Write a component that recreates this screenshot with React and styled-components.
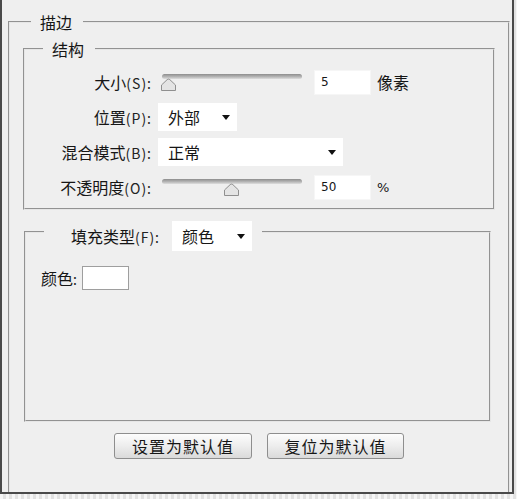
import React from 'react';
import styled, { createGlobalStyle } from 'styled-components';

const GlobalStyle = createGlobalStyle`
  html, body {
    margin: 0;
    padding: 0;
    background: #e8e8e8;
  }
  body {
    font-family: "Noto Sans CJK SC", "Liberation Sans", sans-serif;
    font-size: 16px;
    color: #161616;
  }
`;

const Screen = styled.div`
  width: 517px;
  height: 499px;
  overflow: hidden;
  background: repeating-linear-gradient(90deg, #f6f6f6 0 3px, #e2e2e2 3px 6px);
`;

const Window = styled.div`
  box-sizing: border-box;
  width: 514px;
  height: 494px;
  padding: 13px 0 0 6px;
  background: #efefef;
  border: 2px solid #4a4a4a;
  border-top: none;
  overflow: hidden;
`;

const Group = styled.fieldset`
  margin: 0;
  padding: 0;
  min-width: 0;
  border: 2px groove #e6e6e6;
`;

const OuterGroup = styled(Group)`
  width: 502px;
  height: 520px;
  box-sizing: border-box;
  border-bottom: none;
`;

const InnerGroup = styled(Group)`
  margin: ${p => p.$margin};
`;

const Legend = styled.legend`
  margin-left: ${p => p.$offset}px;
  padding: 0 11px 0 9px;
  line-height: 18px;
  height: 18px;
`;

const FillLegend = styled.legend`
  display: flex;
  align-items: flex-start;
  height: 22px;
  margin-left: 18px;
  padding: 0 10px 0 24px;
  gap: 12px;
`;

const Rows = styled.div`
  display: flex;
  flex-direction: column;
  gap: 7px;
  padding: 10px 0 7px;
`;

const Row = styled.div`
  display: flex;
  align-items: center;
  height: 28px;
`;

const Label = styled.span`
  width: ${p => p.$width || 127}px;
  margin-right: ${p => (p.$gap === undefined ? 6 : p.$gap)}px;
  text-align: right;
  white-space: nowrap;
  line-height: ${p => p.$line || 28}px;
`;

const Key = styled.span`
  font-size: 14px;
  letter-spacing: 1px;
  color: #222;
`;

const SliderBox = styled.div`
  display: flex;
  flex-direction: column;
  width: 140px;
  height: 28px;
  margin-left: 4px;
  padding-top: 6px;
  box-sizing: border-box;
`;

const Track = styled.div`
  height: 5px;
  border-radius: 3px;
  background: linear-gradient(#8d8d8d, #b9b9b9 60%, #dedede);
`;

const Thumb = styled.svg`
  display: block;
  margin-top: -1px;
`;

const Field = styled.div`
  box-sizing: border-box;
  width: 57px;
  height: 25px;
  margin-left: 12px;
  padding-left: 6px;
  background: #fff;
  border: 1px solid #f6f6f6;
  font-family: "DejaVu Sans", sans-serif;
  font-size: 12px;
  line-height: 23px;
`;

const Unit = styled.span`
  margin-left: 6px;
  font-size: ${p => (p.$latin ? 13 : 16)}px;
  font-family: ${p => (p.$latin ? '"DejaVu Sans", sans-serif' : 'inherit')};
`;

const Select = styled.div`
  box-sizing: border-box;
  display: flex;
  align-items: center;
  justify-content: space-between;
  width: ${p => p.$width}px;
  height: ${p => p.$height || 28}px;
  padding: 0 7px 0 10px;
  background: #fff;
  flex-shrink: 0;
`;

const Arrow = styled.span`
  width: 0;
  height: 0;
  border-left: 4px solid transparent;
  border-right: 4px solid transparent;
  border-top: 5px solid #111;
`;

const FillBody = styled.div`
  box-sizing: border-box;
  height: 177px;
  padding: 23px 0 0 9px;
`;

const ColorRow = styled.div`
  display: flex;
  align-items: center;
  height: 24px;
`;

const Swatch = styled.div`
  box-sizing: border-box;
  width: 47px;
  height: 24px;
  background: #fff;
  border: 1px solid #9e9e9e;
`;

const Buttons = styled.div`
  display: flex;
  justify-content: center;
  gap: 15px;
  margin-top: 11px;
`;

const Button = styled.button`
  width: ${p => p.$width}px;
  height: 26px;
  padding: 0;
  border: 1px solid #8e8e8e;
  border-radius: 3px;
  background: linear-gradient(#fdfdfd, #ededed 50%, #dadada);
  font-family: inherit;
  font-size: 16px;
  letter-spacing: 1px;
  color: #161616;
`;

const Slider = ({ pct }) => (
  <SliderBox>
    <Track />
    <Thumb
      width="17"
      height="14"
      viewBox="0 0 17 14"
      style={{ marginLeft: -2 + pct * 125 }}
    >
      <path
        d="M1.5 12.5 V7 L7.2 1.6 Q8.5 0.6 9.8 1.6 L15.5 7 V12.5 Z"
        fill="#e4e4e4"
        stroke="#8f8f8f"
        strokeLinejoin="round"
      />
    </Thumb>
  </SliderBox>
);

const Caption = ({ text, hotkey }) => (
  <>
    {text}
    <Key>({hotkey}):</Key>
  </>
);

export default function App() {
  return (
    <>
      <GlobalStyle />
      <Screen>
        <Window>
          <OuterGroup>
            <Legend $offset={21}>描边</Legend>

            <InnerGroup $margin="9px 13px 0 13px">
              <Legend $offset={18}>结构</Legend>
              <Rows>
                <Row>
                  <Label><Caption text="大小" hotkey="S" /></Label>
                  <Slider pct={0} />
                  <Field>5</Field>
                  <Unit>像素</Unit>
                </Row>
                <Row>
                  <Label><Caption text="位置" hotkey="P" /></Label>
                  <Select $width={79}>外部<Arrow /></Select>
                </Row>
                <Row>
                  <Label><Caption text="混合模式" hotkey="B" /></Label>
                  <Select $width={185}>正常<Arrow /></Select>
                </Row>
                <Row>
                  <Label><Caption text="不透明度" hotkey="O" /></Label>
                  <Slider pct={0.5} />
                  <Field>50</Field>
                  <Unit $latin>%</Unit>
                </Row>
              </Rows>
            </InnerGroup>

            <InnerGroup $margin="11px 17px 0 14px">
              <FillLegend>
                <Label $width={92} $line={30} $gap={0}>
                  <Caption text="填充类型" hotkey="F" />
                </Label>
                <Select $width={80} $height={30}>颜色<Arrow /></Select>
              </FillLegend>
              <FillBody>
                <ColorRow>
                  <Label $width={43} $line={24} $gap={4}>
                    颜色<Key>:</Key>
                  </Label>
                  <Swatch />
                </ColorRow>
              </FillBody>
            </InnerGroup>

            <Buttons>
              <Button $width={138}>设置为默认值</Button>
              <Button $width={137}>复位为默认值</Button>
            </Buttons>
          </OuterGroup>
        </Window>
      </Screen>
    </>
  );
}
